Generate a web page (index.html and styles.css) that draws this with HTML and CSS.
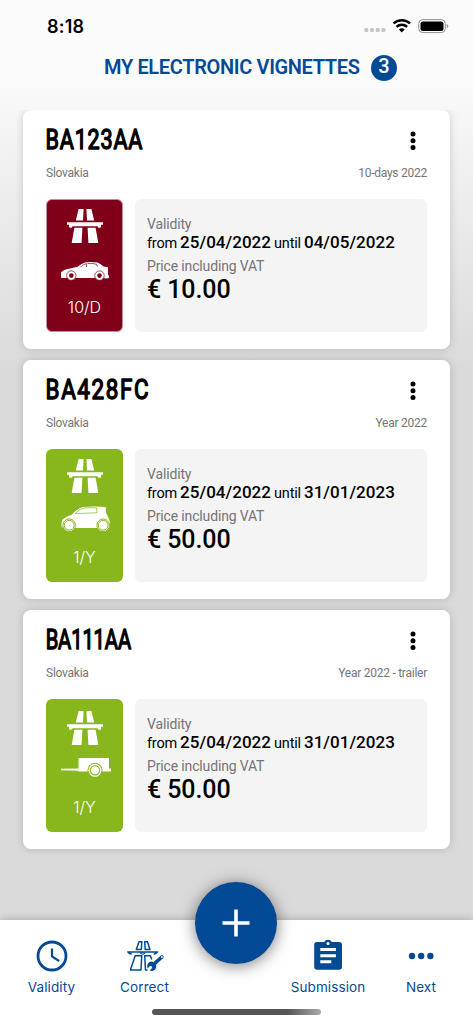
FILE: index.html
```html
<!DOCTYPE html>
<html lang="en">
<head>
<meta charset="utf-8">
<title>My electronic vignettes</title>
<link rel="stylesheet" href="styles.css">
</head>
<body>
<svg width="0" height="0" class="defs">
  <defs>
    <symbol id="road" viewBox="0 0 36 36">
      <path d="M11.600 1h5l-.6 11.600H8.800zM19.400 1h5l2.800 11.600H20z"/>
      <path d="M0 14.300h36v2.400h-2v2.100q0 1-1 1h-1.600l-1-1.600H5.600l-1 1.600H3q-1 0-1-1v-2.100H0z"/>
      <path d="M7.400 19.800h8L14.600 35H4.700zM20.600 19.800h8L31.300 35h-9.900z"/>
    </symbol>
  </defs>
</svg>
<div class="screen">
  <header class="status">
    <span class="time">8:18</span>
    <svg class="status-icons" width="86" height="16" viewBox="0 0 86 16">
      <g fill="#c6c6c7"><rect x=".3" y="10" width="4" height="4" rx="1.300"/><rect x="6" y="10" width="4" height="4" rx="1.300"/><rect x="11.700" y="10" width="4" height="4" rx="1.300"/><rect x="17.400" y="10" width="4" height="4" rx="1.300"/></g>
      <g fill="none" stroke="#000" stroke-width="2.600"><path d="M29.500 5.400a12.300 12.300 0 0 1 16.600 0"/><path d="M32.500 8.900a7.800 7.800 0 0 1 10.600 0"/></g>
      <path d="M34.900 11.500a4.500 4.500 0 0 1 5.800 0L37.800 14.500z"/>
      <rect x="54.700" y="1.600" width="26.600" height="13" rx="4" fill="none" stroke="#909090"/>
      <rect x="56.500" y="3.400" width="23" height="9.500" rx="2.500"/>
      <path d="M82.700 6q1.700.6 1.700 2.100t-1.700 2.100z" fill="#999"/>
    </svg>
  </header>
  <div class="title"><h1>MY ELECTRONIC VIGNETTES</h1><span class="count">3</span></div>

  <main class="list">
    <article class="card">
      <div class="head">
        <svg class="plate" width="120" height="30"><text transform="scale(.8 1)" x="-.5" y="24.500" textLength="121" lengthAdjust="spacing">BA123AA</text></svg>
        <svg class="more" width="6" height="20"><circle cx="3" cy="3" r="2.500"/><circle cx="3" cy="9.800" r="2.500"/><circle cx="3" cy="16.600" r="2.500"/></svg>
      </div>
      <div class="meta"><span>Slovakia</span><span>10-days 2022</span></div>
      <div class="body">
        <div class="tag red">
          <svg class="road" width="36" height="36"><use href="#road"/></svg>
          <svg class="vehicle" width="50" height="26" viewBox="0 0 50 26">
            <path fill="#fff" d="M1 20V14.500Q3 11.800 9 10.800L17.500 8.800Q22 5.200 25 4.400Q31 3.600 37.500 4.600Q41 6.200 43.500 8.400L48 9.200V16.500L49 18V20Q46 20.800 43.300 20H2z"/>
            <path class="cut" d="M20.500 9Q23.500 6 26.500 5.700V9M27.500 5.600Q34 5.200 36.500 6.300L37.500 8.700"/>
            <g class="cut wheel"><circle cx="11.300" cy="17.600" r="4.700"/><circle cx="39.500" cy="17.600" r="4.700"/></g>
            <g fill="#80001a"><circle cx="11.300" cy="17.600" r="2.300"/><circle cx="39.500" cy="17.600" r="2.300"/></g>
          </svg>
          <span class="term">10/D</span>
        </div>
        <div class="info">
          <p class="label">Validity</p>
          <p class="dates">from <b>25/04/2022</b> until <b>04/05/2022</b></p>
          <p class="label">Price including VAT</p>
          <p class="price">€ 10.00</p>
        </div>
      </div>
    </article>

    <article class="card">
      <div class="head">
        <svg class="plate" width="120" height="30"><text transform="scale(.83 1)" x="-.5" y="24.500" textLength="124" lengthAdjust="spacing">BA428FC</text></svg>
        <svg class="more" width="6" height="20"><circle cx="3" cy="3" r="2.500"/><circle cx="3" cy="9.800" r="2.500"/><circle cx="3" cy="16.600" r="2.500"/></svg>
      </div>
      <div class="meta"><span>Slovakia</span><span>Year 2022</span></div>
      <div class="body">
        <div class="tag green">
          <svg class="road" width="36" height="36"><use href="#road"/></svg>
          <svg class="vehicle" width="50" height="26" viewBox="0 0 50 26">
            <path fill="#fff" d="M.7 21Q0 17 1.500 13.500Q5 10.500 11 8.500Q17 2 22 .9Q32 0 41 .8L45.400 1.600Q44.500 3.600 44.900 6.400L47.800 12.500Q49.500 16 48.800 21L47.500 22H3z"/>
            <path class="cut" d="M14 7.500Q18.500 2.500 24 2Q31 1.300 35.500 1.900L36 6.700L16.500 7.600z"/>
            <g fill="#fff" stroke="#87b71d" stroke-width="1"><circle cx="8.200" cy="19.300" r="6.300"/><circle cx="42.200" cy="19.300" r="6.300"/><circle cx="8.200" cy="19.300" r="4.900"/><circle cx="42.200" cy="19.300" r="4.900"/></g>
          </svg>
          <span class="term">1/Y</span>
        </div>
        <div class="info">
          <p class="label">Validity</p>
          <p class="dates">from <b>25/04/2022</b> until <b>31/01/2023</b></p>
          <p class="label">Price including VAT</p>
          <p class="price">€ 50.00</p>
        </div>
      </div>
    </article>

    <article class="card">
      <div class="head">
        <svg class="plate" width="120" height="30"><text transform="scale(.75 1)" x="-.5" y="24.500" textLength="114" lengthAdjust="spacing">BA111AA</text></svg>
        <svg class="more" width="6" height="20"><circle cx="3" cy="3" r="2.500"/><circle cx="3" cy="9.800" r="2.500"/><circle cx="3" cy="16.600" r="2.500"/></svg>
      </div>
      <div class="meta"><span>Slovakia</span><span>Year 2022 - trailer</span></div>
      <div class="body">
        <div class="tag green trailer">
          <svg class="road" width="36" height="36"><use href="#road"/></svg>
          <svg class="vehicle" width="50" height="26" viewBox="0 0 50 26">
            <path fill="#fff" d="M17.500 1H48V11.500H50V14.500H17.500V13.800L0 13.300V11.700L17.500 11.500z"/>
            <circle cx="34" cy="13.300" r="7.500" fill="#87b71d"/>
            <circle cx="34" cy="13.300" r="6.500" fill="#fff"/>
            <circle cx="34" cy="13.300" r="4.600" fill="none" stroke="#87b71d" stroke-width="1.200"/>
          </svg>
          <span class="term">1/Y</span>
        </div>
        <div class="info">
          <p class="label">Validity</p>
          <p class="dates">from <b>25/04/2022</b> until <b>31/01/2023</b></p>
          <p class="label">Price including VAT</p>
          <p class="price">€ 50.00</p>
        </div>
      </div>
    </article>
  </main>

  <nav class="tabs">
    <div class="tab">
      <svg width="36" height="36" viewBox="0 0 36 36" fill="none" stroke="#034a96"><circle cx="18" cy="18" r="14" stroke-width="2.800"/><path d="M18 10.500V18.300L25.200 23.200" stroke-width="2.200"/></svg>
      <span>Validity</span>
    </div>
    <div class="tab">
      <svg width="40" height="36" viewBox="0 0 40 36" fill="none" stroke="#034a96" stroke-width="1.500" stroke-linejoin="round">
        <path d="M14 3.700h2.800l-.5 7.800H11.300zM19.700 3.700h2.800l2.500 7.800H20.200z"/>
        <path d="M2.200 14h31M3.200 14.200q1 1.800 3.500 1.800M32.200 14.200q-1 1.800-3.500 1.800"/>
        <path d="M15.200 14.900h5l-2.500 1.800z" stroke-width="1"/>
        <path d="M10.200 17.800h6.500L16 32H5.400zM26.700 21.500L25.400 17.700H19.700L20.500 32H22.500"/>
        <path d="M28.500 26.500L36.800 19" stroke="#fff" stroke-width="5.400" stroke-linecap="round"/>
        <path d="M28 27L36.800 19" stroke-width="3.700" stroke-linecap="round"/>
        <circle cx="36.900" cy="19" r=".9" fill="#fff" stroke="none"/>
        <path fill="#034a96" stroke="none" d="M27.700 23.700l3.500 3.800q.4 4-3 5.300-2 .5-3.500-.2l2.500-2.700-.4-1.700-1.700-.4-2.500 2.600q-1.200-3.700 1.200-5.800 1.700-1.300 3.900-.9z"/>
      </svg>
      <span>Correct</span>
    </div>
    <div class="tab add">
      <div class="fab"><svg width="82" height="82" viewBox="0 0 82 82"><path d="M41 27.500v27M27.500 41h27" stroke="#fff" stroke-width="3.600"/></svg></div>
    </div>
    <div class="tab">
      <svg width="36" height="36" viewBox="0 0 36 36">
        <path fill="#034a96" d="M6.800 4h7.400a4.300 4.300 0 0 1 7.600 0H29q3 0 3 3V28.700q0 3-3 3H7.200q-3 0-3-3V7q0-3 2.600-3z"/>
        <circle cx="18" cy="5.400" r="1.500" fill="#fff"/>
        <path d="M10.300 11.600h15.600M10.300 17.700h15.600M10.300 23.800h11" stroke="#fff" stroke-width="3"/>
      </svg>
      <span>Submission</span>
    </div>
    <div class="tab">
      <svg width="36" height="36" viewBox="0 0 36 36" fill="#034a96"><circle cx="9" cy="18" r="3.200"/><circle cx="18.200" cy="18" r="3.200"/><circle cx="27.400" cy="18" r="3.200"/></svg>
      <span>Next</span>
    </div>
    <div class="home"></div>
  </nav>
</div>
</body>
</html>
```

FILE: styles.css
```css
* { box-sizing: border-box; }
body { margin: 0; font-family: Roboto, sans-serif; color: #000; }
.defs { position: absolute; }
svg { display: block; }
.screen {
  width: 473px; height: 1024px; display: flex; flex-direction: column; overflow: hidden;
  background: linear-gradient(#fbfbfb 0, #fbfbfb 80px, #f5f5f5 125px, #dadada 370px, #dadada 100%);
}
.status { height: 50px; padding: 18px 23px 0 47px; display: flex; justify-content: space-between; }
.time { font: 600 18px/18px Inter, sans-serif; letter-spacing: .2px; }
.title { height: 60px; padding: 4px 0 0 104px; display: flex; gap: 11px; }
h1 { margin: 0; width: 256px; font-size: 20px; line-height: 26px; font-weight: 600; letter-spacing: -.35px; color: #034a96; white-space: nowrap; }
.count { width: 26px; height: 26px; margin-top: 1px; border-radius: 50%; background: #034a96; color: #fff; font-size: 20px; line-height: 23px; font-weight: 500; text-align: center; }
.list { padding: 0 23px; display: flex; flex-direction: column; gap: 11px; clip-path: inset(0 0 -20px 0); }
.card { height: 239px; border-radius: 8px; background: #fff; padding: 14px 23px 0; box-shadow: 0 0 8px rgba(0,0,0,.17); }
.head { height: 40px; display: flex; justify-content: space-between; }
.plate { overflow: visible; font: 400 27px Roboto, sans-serif; stroke: #000; stroke-width: 1.400px; stroke-linejoin: round; }
.more { margin: 7px 11px 0 0; }
.meta { height: 35px; padding-top: .5px; display: flex; justify-content: space-between; color: #757575; font-size: 12px; line-height: 17px; letter-spacing: -.25px; }
.body { display: flex; gap: 12px; }
.tag { width: 77px; height: 133px; border-radius: 6px; padding-top: 9px; display: flex; flex-direction: column; align-items: center; color: #fff; }
.red { background: #80001a; border: 1px solid #c78c97; padding-top: 8px; }
.green { background: #87b71d; }
.road { fill: #fff; }
.vehicle { margin: 12px 0 0 3px; }
.red .vehicle { margin: 14px 0 0 1px; }
.trailer { padding-top: 11px; }
.trailer .vehicle { margin-top: 11px; }
.cut { fill: none; stroke: #80001a; stroke-width: .7px; }
.wheel { fill: #fff; }
.green .cut { stroke: #87b71d; }
.term { margin-top: auto; padding-bottom: 15px; font: 300 16px/20px Inter, sans-serif; }
.red .term { padding-bottom: 14px; }
.info { width: 292px; height: 133px; border-radius: 6px; background: #f4f4f4; padding: 16px 12px; white-space: nowrap; }
p { margin: 0; }
.label { font-size: 14px; line-height: 19px; letter-spacing: -.15px; color: #757575; }
.dates { height: 23px; font-size: 14.500px; line-height: 17px; letter-spacing: -.2px; word-spacing: -.3px; }
.dates b { font-size: 17px; font-weight: 500; letter-spacing: .03px; }
.price { font-size: 25px; line-height: 27px; font-weight: 500; letter-spacing: -.1px; }
.tabs { position: relative; margin-top: auto; height: 104px; background: #fff; box-shadow: 0 -1px 8px rgba(0,0,0,.2); display: grid; grid-template-columns: 103px 83px 99px 86px 100px; color: #034a96; }
.tab { display: flex; flex-direction: column; align-items: center; padding-top: 18px; }
.tab span { font: 400 13.500px/20px Inter, sans-serif; margin-top: 3px; letter-spacing: .1px; white-space: nowrap; }
.add { padding-top: 0; }
.fab { margin-top: -38px; width: 82px; height: 82px; border-radius: 50%; background: #034a96; box-shadow: 0 2px 16px rgba(0,0,0,.5); }
.home { position: absolute; left: 152px; top: 89px; width: 169px; height: 6px; border-radius: 3px; background: linear-gradient(90deg, #555 0, #555 80%, #aaa); }
```
